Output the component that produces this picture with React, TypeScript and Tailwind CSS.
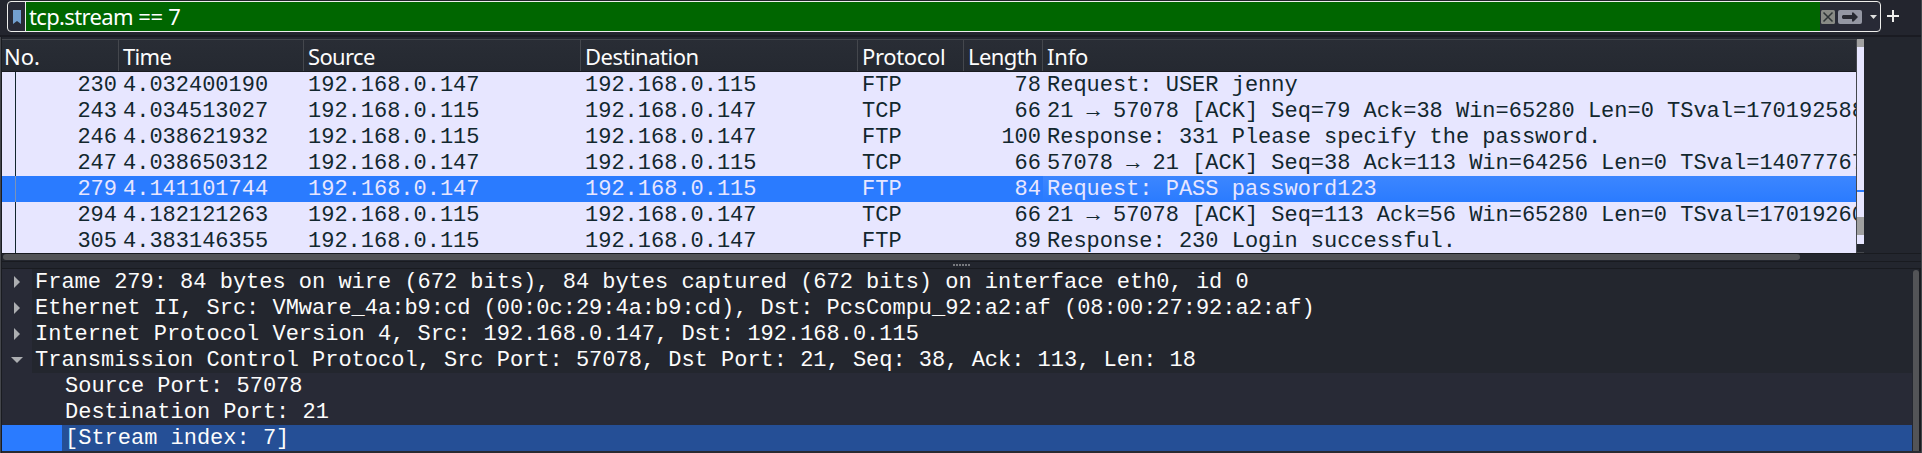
import React from "react";

type Packet = [string, string, string, string, string, string, string];

const packets: Packet[] = [
  ["230", "4.032400190", "192.168.0.147", "192.168.0.115", "FTP", "78", "Request: USER jenny"],
  ["243", "4.034513027", "192.168.0.115", "192.168.0.147", "TCP", "66", "21 → 57078 [ACK] Seq=79 Ack=38 Win=65280 Len=0 TSval=170192588"],
  ["246", "4.038621932", "192.168.0.115", "192.168.0.147", "FTP", "100", "Response: 331 Please specify the password."],
  ["247", "4.038650312", "192.168.0.147", "192.168.0.115", "TCP", "66", "57078 → 21 [ACK] Seq=38 Ack=113 Win=64256 Len=0 TSval=14077767"],
  ["279", "4.141101744", "192.168.0.147", "192.168.0.115", "FTP", "84", "Request: PASS password123"],
  ["294", "4.182121263", "192.168.0.115", "192.168.0.147", "TCP", "66", "21 → 57078 [ACK] Seq=113 Ack=56 Win=65280 Len=0 TSval=17019260"],
  ["305", "4.383146355", "192.168.0.115", "192.168.0.147", "FTP", "89", "Response: 230 Login successful."],
];

const headers = [
  { label: "No.", style: "pl-[2px]" },
  { label: "Time", style: "pl-[4px] tracking-[-0.7px]" },
  { label: "Source", style: "pl-[4px] tracking-[-0.65px]" },
  { label: "Destination", style: "pl-[4px] tracking-[-0.5px]" },
  { label: "Protocol", style: "pl-[4px] tracking-[-0.35px]" },
  { label: "Length", style: "pl-[4px] tracking-[-0.6px]" },
  { label: "Info", style: "pl-[4px] tracking-[-0.2px]" },
];

const layers = [
  "Frame 279: 84 bytes on wire (672 bits), 84 bytes captured (672 bits) on interface eth0, id 0",
  "Ethernet II, Src: VMware_4a:b9:cd (00:0c:29:4a:b9:cd), Dst: PcsCompu_92:a2:af (08:00:27:92:a2:af)",
  "Internet Protocol Version 4, Src: 192.168.0.147, Dst: 192.168.0.115",
  "Transmission Control Protocol, Src Port: 57078, Dst Port: 21, Seq: 38, Ack: 113, Len: 18",
];

const columns = "grid grid-cols-[117px_185px_277px_277px_106px_79px_813px]";

function FilterBar() {
  return (
    <div className="flex h-[37px] shrink-0 border-b-2 border-[#1a1b22] bg-[#23252e] pt-px pl-[7px]">
      <div className="flex h-[31px] w-[1874px] overflow-hidden rounded-[4px] border border-[#eeeeec] bg-[#282a36]">
        <div className="flex w-[18px] items-center justify-center border-r border-[#eeeeec]">
          <svg width="8" height="14" viewBox="0 0 8 14">
            <path d="M0 0H8V14L4 11L0 14Z" fill="#729fcf" />
          </svg>
        </div>
        <div className="flex flex-1 items-center bg-[#006600] pl-[3px] text-[22px] whitespace-pre text-white">
          <span>
            <span className="tracking-[-0.65px]">tcp.stream</span>
            <span className="tracking-[-0.3px]"> == 7</span>
          </span>
        </div>
        <div className="flex w-[60px] items-center pl-px">
          <svg width="14" height="14" viewBox="0 0 14 14">
            <rect width="14" height="14" rx="1.5" fill="#888a85" />
            <path d="M2.5 2.5L11.5 11.5M11.5 2.5L2.5 11.5" stroke="#2e3436" strokeWidth="1.5" />
          </svg>
          <svg className="ml-[3px]" width="24" height="14" viewBox="0 0 24 14">
            <rect width="24" height="14" rx="2" fill="#9497a3" />
            <path d="M5 5H14V2.5H15.5L20 7L15.5 11.5H14V9H5L4 8V6Z" fill="#282a32" />
          </svg>
          <svg className="ml-2" width="7" height="4" viewBox="0 0 7 4">
            <path d="M0 0H7L3.5 4Z" fill="#e0e0e0" />
          </svg>
        </div>
      </div>
      <svg className="mt-[9px] ml-[6px]" width="12" height="12" viewBox="0 0 12 12">
        <path d="M6 0V12M0 6H12" stroke="#eeeeec" strokeWidth="2" />
      </svg>
    </div>
  );
}

function PacketList() {
  return (
    <div className="flex h-[214px] w-[1854px] shrink-0 flex-col overflow-hidden">
      <div className={`${columns} h-[33px] shrink-0 border-t border-b border-t-[#44474d] border-b-[#191b20] bg-linear-to-b from-[#292d35] to-[#252931] text-[22px] leading-[32px] text-[#fcfcfc]`}>
        {headers.map(({ label, style }) => (
          <div key={label} className={`${style} h-[31px] border-r border-[#44474d] last:border-r-0`}>
            {label}
          </div>
        ))}
      </div>
      {packets.map((packet) => {
        const selected = packet[0] === "279";
        return (
          <div
            key={packet[0]}
            className={`${columns} h-[26px] shrink-0 overflow-hidden font-['Liberation_Mono',monospace] text-[22px] leading-[27px] tracking-[-0.01px] whitespace-pre ${
              selected ? "bg-[#2a7bff] text-[#e7e6ff]" : "bg-[#e7e6ff] text-[#12272e]"
            }`}
          >
            <div className="flex">
              <div className={`w-[14px] shrink-0 border-r ${selected ? "border-[#7b93b8]" : "border-[#12272e]"}`} />
              <div className="flex-1 pr-[2px] text-right">{packet[0]}</div>
            </div>
            <div className="pl-[4px]">{packet[1]}</div>
            <div className="pl-[4px]">{packet[2]}</div>
            <div className="pl-[4px]">{packet[3]}</div>
            <div className="pl-[4px]">{packet[4]}</div>
            <div className="pr-[2px] text-right">{packet[5]}</div>
            <div className={`h-[26px] overflow-hidden pl-[4px] ${selected ? "bg-linear-to-b from-[#3c86ff] to-[#2a7bff]" : ""}`}>
              {packet[6]}
            </div>
          </div>
        );
      })}
    </div>
  );
}

function ScrollMap() {
  return (
    <div className="flex h-[214px] w-[8px] shrink-0 flex-col border-l border-[#44474d]">
      <div className="h-[8px] bg-[#a0a0a0]" />
      <div className="h-[143px] bg-[#e7e6ff]" />
      <div className="h-[2px] bg-[#2a7bff]" />
      <div className="h-[25px] bg-[#e7e6ff]" />
      <div className="h-[18px] bg-[#a0a0a0]" />
      <div className="h-[9px] bg-[#e7e6ff]" />
      <div className="h-[9px] border-b border-[#44474d]" />
    </div>
  );
}

function PacketDetails() {
  return (
    <div className="flex h-[182px] shrink-0 font-['Liberation_Mono',monospace] text-[22px] leading-[27px] tracking-[-0.01px] whitespace-pre text-[#fcfcfc]">
      <div className="w-[1910px]">
        {layers.map((text, i) => (
          <div key={text} className="flex h-[26px]">
            <div className="flex w-[30px] items-center justify-center bg-[#282a36]">
              {i < 3 ? (
                <svg width="6" height="12" viewBox="0 0 6 12">
                  <path d="M0 0L6 6L0 12Z" fill="#acaeb1" />
                </svg>
              ) : (
                <svg width="12" height="6" viewBox="0 0 12 6">
                  <path d="M0 0H12L6 6Z" fill="#acaeb1" />
                </svg>
              )}
            </div>
            <div className="flex-1 pl-[3px]">{text}</div>
          </div>
        ))}
        <div className="h-[26px] bg-[#282a36] pl-[63px]">Source Port: 57078</div>
        <div className="h-[26px] bg-[#282a36] pl-[63px]">Destination Port: 21</div>
        <div className="flex h-[26px] bg-[#254f96]">
          <div className="w-[60px] bg-[#2a7bff]" />
          <div className="pl-[3px]">[Stream index: 7]</div>
        </div>
      </div>
      <div className="mt-px ml-px w-[6px] rounded-t-[3px] bg-[#535457]" />
      <div className="w-[2px] bg-[#1a1c21]" />
    </div>
  );
}

export default function App() {
  return (
    <div className="flex h-[453px] w-[1922px] overflow-hidden bg-[#23262e] font-['Noto_Sans',sans-serif]">
      <div className="flex w-[1921px] flex-col">
        <FilterBar />
        <div className="flex min-h-0 flex-1">
          <div className="w-[2px] border-r border-[#1a1c21] bg-[#44464b]" />
          <div className="flex flex-1 flex-col">
            <div className="h-[2px] shrink-0 bg-[#23262e]" />
            <div className="flex h-[214px] shrink-0">
              <PacketList />
              <ScrollMap />
            </div>
            <div className="flex h-[9px] shrink-0 border-t border-b border-[#191b20]">
              <div className="ml-px h-[6px] w-[1797px] rounded-[3px] bg-[#535457]" />
            </div>
            <div className="flex h-[7px] shrink-0 justify-center gap-px border-b border-[#191b20] pt-[2px]">
              {[0, 1, 2, 3, 4, 5].map((dot) => (
                <div key={dot} className="size-[2px] bg-[#77797d]" />
              ))}
            </div>
            <PacketDetails />
            <div className="h-[2px] bg-[#292a31]" />
          </div>
        </div>
      </div>
      <div className="w-px bg-[#44464b]" />
    </div>
  );
}
